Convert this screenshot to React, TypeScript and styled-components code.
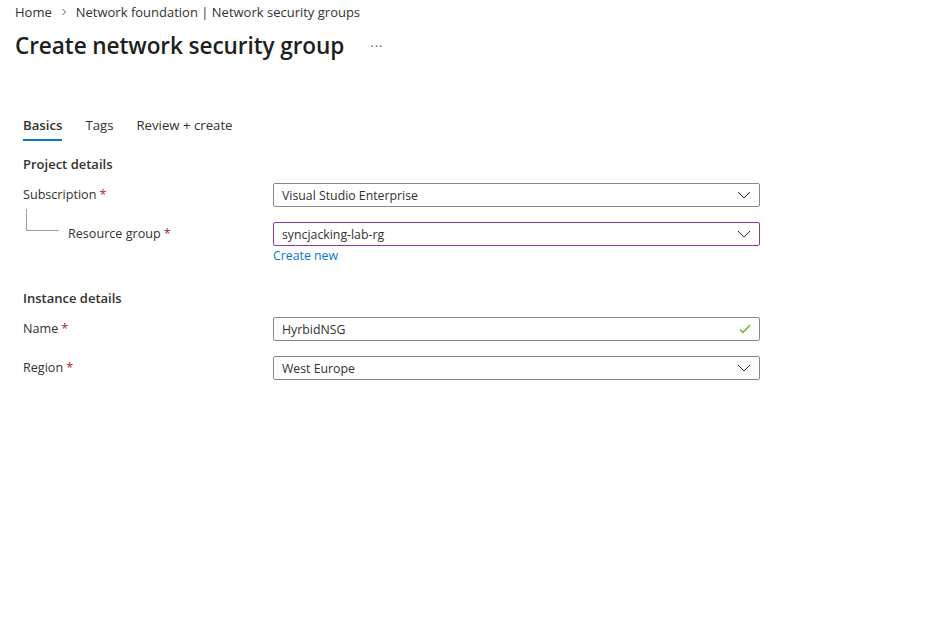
import React from 'react';
import styled, { createGlobalStyle } from 'styled-components';

const GlobalStyle = createGlobalStyle`
  body {
    margin: 0;
    background: #ffffff;
    font-family: "Open Sans", "Noto Sans", sans-serif;
    color: #323130;
  }
`;

const Page = styled.div`
  width: 931px;
  height: 621px;
  background: #fff;
  overflow: hidden;
`;

const Header = styled.div`
  padding: 3px 15px 0 15px;
`;

const Breadcrumb = styled.div`
  display: flex;
  align-items: center;
  height: 18px;
  font-size: 13px;
  color: #323130;
`;

const Crumb = styled.span`
  white-space: nowrap;
`;

const CrumbSep = styled.span`
  display: inline-flex;
  margin: 0 9px 0 9px;
  color: #605e5c;
`;

const TitleRow = styled.div`
  display: flex;
  align-items: center;
  margin-top: 8px;
  height: 32px;
`;

const Title = styled.h1`
  margin: 0;
  font-size: 22.6px;
  font-weight: 600;
  color: #201f1e;
  letter-spacing: -0.1px;
  white-space: nowrap;
`;

const More = styled.span`
  margin-left: 26px;
  font-size: 13px;
  color: #605e5c;
  letter-spacing: 1px;
  position: relative;
  top: 1px;
`;

const Body = styled.div`
  padding: 0 23px;
  margin-top: 55px;
`;

const Tabs = styled.div`
  display: flex;
  gap: 23px;
`;

const Tab = styled.div<{ $active?: boolean }>`
  font-size: 13.2px;
  color: #323130;
  font-weight: ${(p) => (p.$active ? 600 : 400)};
  padding-bottom: 5px;
  border-bottom: 2px solid ${(p) => (p.$active ? '#0078d4' : 'transparent')};
  white-space: nowrap;
`;

const SectionTitle = styled.div<{ $top: number }>`
  font-size: 13px;
  font-weight: 600;
  color: #323130;
  margin-top: ${(p) => p.$top}px;
  height: 20px;
  line-height: 20px;
`;

const Row = styled.div<{ $top: number }>`
  display: grid;
  grid-template-columns: 250px 487px;
  align-items: start;
  margin-top: ${(p) => p.$top}px;
`;

const Label = styled.div<{ $indent?: boolean }>`
  position: relative;
  height: 24px;
  line-height: 24px;
  font-size: 12.6px;
  color: #323130;
  padding-left: ${(p) => (p.$indent ? '45px' : '0')};
`;

const Star = styled.span`
  color: #a4262c;
  margin-left: 3px;
`;

const TreeLine = styled.span`
  position: absolute;
  left: 3px;
  top: -13px;
  width: 32px;
  height: 21px;
  border-left: 1px solid #a19f9d;
  border-bottom: 1px solid #a19f9d;
`;

const Field = styled.div`
  display: flex;
  flex-direction: column;
`;

const Box = styled.div<{ $focus?: boolean }>`
  box-sizing: border-box;
  height: 24px;
  display: flex;
  align-items: center;
  justify-content: space-between;
  padding: 0 8px;
  border: 1px solid ${(p) => (p.$focus ? '#8a3aa8' : '#8a8886')};
  border-radius: 2px;
  font-size: 12.3px;
  color: #323130;
`;

const BoxText = styled.span`
  white-space: nowrap;
`;

const Link = styled.a`
  font-size: 12.3px;
  color: #0078d4;
  text-decoration: none;
  margin-top: 1px;
  line-height: 18px;
`;

const Chevron = () => (
  <svg width="14" height="8" viewBox="0 0 14 8" fill="none">
    <path d="M1 1 L7 7 L13 1" stroke="#323130" strokeWidth="1" />
  </svg>
);

const Check = () => (
  <svg width="12" height="10" viewBox="0 0 12 10" fill="none">
    <path d="M1 5.5 L4 8.5 L11 1" stroke="#57a300" strokeWidth="1.1" />
  </svg>
);

const Caret = () => (
  <svg width="6" height="8" viewBox="0 0 6 8" fill="none">
    <path d="M1.5 1 L4.5 4 L1.5 7" stroke="#605e5c" strokeWidth="1" />
  </svg>
);

export default function App() {
  return (
    <Page>
      <GlobalStyle />
      <Header>
        <Breadcrumb>
          <Crumb>Home</Crumb>
          <CrumbSep>
            <Caret />
          </CrumbSep>
          <Crumb>Network foundation | Network security groups</Crumb>
        </Breadcrumb>
        <TitleRow>
          <Title>Create network security group</Title>
          <More>···</More>
        </TitleRow>
      </Header>
      <Body>
        <Tabs>
          <Tab $active>Basics</Tab>
          <Tab>Tags</Tab>
          <Tab>Review + create</Tab>
        </Tabs>

        <SectionTitle $top={13}>Project details</SectionTitle>

        <Row $top={9}>
          <Label>
            Subscription<Star>*</Star>
          </Label>
          <Box>
            <BoxText>Visual Studio Enterprise</BoxText>
            <Chevron />
          </Box>
        </Row>

        <Row $top={15}>
          <Label $indent>
            <TreeLine />
            Resource group<Star>*</Star>
          </Label>
          <Field>
            <Box $focus>
              <BoxText>syncjacking-lab-rg</BoxText>
              <Chevron />
            </Box>
            <Link href="#">Create new</Link>
          </Field>
        </Row>

        <SectionTitle $top={23}>Instance details</SectionTitle>

        <Row $top={9}>
          <Label>
            Name<Star>*</Star>
          </Label>
          <Box>
            <BoxText>HyrbidNSG</BoxText>
            <Check />
          </Box>
        </Row>

        <Row $top={15}>
          <Label>
            Region<Star>*</Star>
          </Label>
          <Box>
            <BoxText>West Europe</BoxText>
            <Chevron />
          </Box>
        </Row>
      </Body>
    </Page>
  );
}
